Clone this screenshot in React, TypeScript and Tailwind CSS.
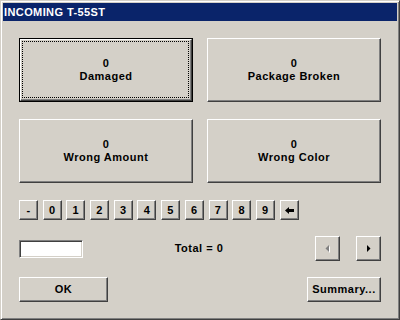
import React from 'react';

const bevel =
  'border border-t-white border-l-white border-r-[#404040] border-b-[#404040] shadow-[inset_-1px_-1px_#808080]';

const BigButton = ({ count, label, focused = false }: { count: number; label: string; focused?: boolean }) => {
  if (focused) {
    return (
      <div className="h-[64px] w-[174px] border border-black">
        <div className={`relative flex h-full w-full flex-col items-center justify-center ${bevel}`}>
          <div className="pointer-events-none absolute left-[1px] top-[1px] right-[2px] bottom-[2px] border border-dotted border-black" />
          <span className="leading-[13px]">{count}</span>
          <span className="leading-[13px]">{label}</span>
        </div>
      </div>
    );
  }
  return (
    <div className={`flex h-[64px] w-[174px] flex-col items-center justify-center ${bevel}`}>
      <span className="leading-[13px]">{count}</span>
      <span className="leading-[13px]">{label}</span>
    </div>
  );
};

const KeyButton = ({ children }: { children: React.ReactNode }) => (
  <div className={`flex h-[20px] w-[19px] items-center justify-center leading-none ${bevel}`}>{children}</div>
);

const keys = ['-', '0', '1', '2', '3', '4', '5', '6', '7', '8', '9'];

export default function App() {
  return (
    <div className="h-[320px] w-[400px] bg-[#d4d0c8] font-['Liberation_Sans',Arial,sans-serif] text-[11px] font-bold tracking-[0.5px] text-black">
      <div className="flex h-full w-full flex-col border border-t-[#d4d0c8] border-l-[#d4d0c8] border-r-[#404040] border-b-[#404040] p-[2px] shadow-[inset_1px_1px_white,inset_-1px_-1px_#808080]">
        {/* title bar */}
        <div className="flex h-[18px] items-center bg-[#0a246a] pl-[1px] text-white tracking-[0.4px]">INCOMING T-55ST</div>

        <div className="flex flex-col px-[16px]">
          <div className="mt-[17px] flex gap-[14px]">
            <BigButton count={0} label="Damaged" focused />
            <BigButton count={0} label="Package Broken" />
          </div>
          <div className="mt-[17px] flex gap-[14px]">
            <BigButton count={0} label="Wrong Amount" />
            <BigButton count={0} label="Wrong Color" />
          </div>

          {/* keypad */}
          <div className="mt-[17px] flex gap-[4.7px]">
            {keys.map((k) => (
              <KeyButton key={k}>{k}</KeyButton>
            ))}
            <KeyButton>
              <svg width="9" height="7" viewBox="0 0 9 7">
                <polygon points="0,3.5 4,0 4,7" fill="black" />
                <rect x="4" y="2" width="5" height="3" fill="black" />
              </svg>
            </KeyButton>
          </div>

          {/* entry row */}
          <div className="mt-[16px] flex h-[25px] items-center">
            <div className="h-[18px] w-[64px] border border-t-[#808080] border-l-[#808080] border-r-white border-b-white bg-white shadow-[inset_1px_1px_#404040,inset_-1px_-1px_#d4d0c8]" />
            <div className="flex flex-1 justify-center">Total = 0</div>
            <div className="flex gap-[16px]">
              <div className={`flex h-[25px] w-[25px] items-center justify-center ${bevel}`}>
                <svg width="5" height="8" viewBox="0 0 5 8">
                  <polygon points="4,0 4,7 0.5,3.5" fill="white" transform="translate(1,1)" />
                  <polygon points="4,0 4,7 0.5,3.5" fill="#808080" />
                </svg>
              </div>
              <div className={`flex h-[25px] w-[25px] items-center justify-center ${bevel}`}>
                <svg width="5" height="8" viewBox="0 0 5 8">
                  <polygon points="1,0 1,7 4.5,3.5" fill="black" />
                </svg>
              </div>
            </div>
          </div>

          {/* bottom buttons */}
          <div className="mt-[16px] flex justify-between">
            <div className={`flex h-[25px] w-[89px] items-center justify-center ${bevel}`}>OK</div>
            <div className={`flex h-[25px] w-[74px] items-center justify-center ${bevel}`}>Summary...</div>
          </div>
        </div>
      </div>
    </div>
  );
}
